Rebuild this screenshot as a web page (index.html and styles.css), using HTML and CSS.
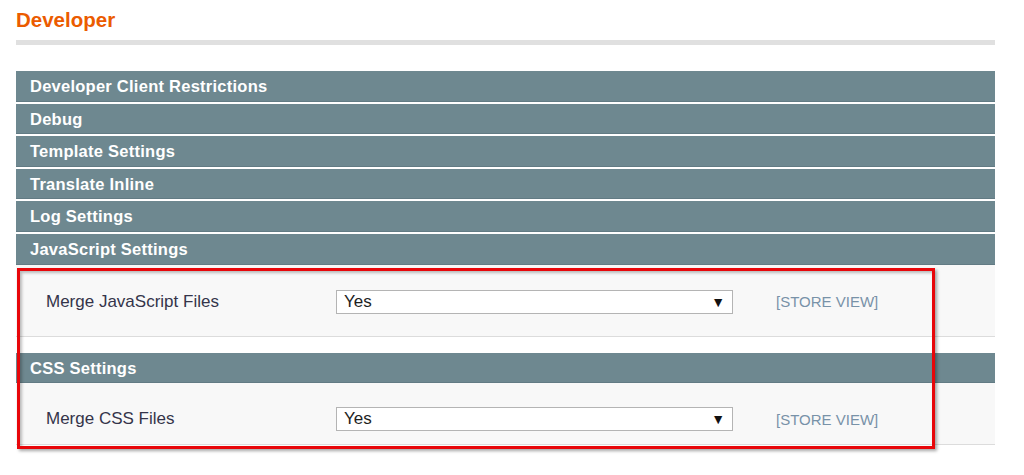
FILE: index.html
```html
<!DOCTYPE html>
<html>
<head>
<meta charset="utf-8">
<link rel="stylesheet" href="styles.css">
</head>
<body>
<div class="page">
  <h1 class="title">Developer</h1>
  <div class="rule"></div>
  <div class="sections">
    <div class="sec-head">Developer Client Restrictions</div>
    <div class="sec-head">Debug</div>
    <div class="sec-head">Template Settings</div>
    <div class="sec-head">Translate Inline</div>
    <div class="sec-head">Log Settings</div>
    <div class="sec-head">JavaScript Settings</div>
    <div class="annotated">
      <div class="sec-body sec-body-js">
        <div class="row">
          <div class="label">Merge JavaScript Files</div>
          <div class="select"><span>Yes</span><span class="arrow">▼</span></div>
          <div class="scope">[STORE VIEW]</div>
        </div>
      </div>
      <div class="spacer"></div>
      <div class="sec-head sec-head-css">CSS Settings</div>
      <div class="sec-body sec-body-css">
        <div class="row">
          <div class="label">Merge CSS Files</div>
          <div class="select"><span>Yes</span><span class="arrow">▼</span></div>
          <div class="scope">[STORE VIEW]</div>
        </div>
      </div>
      <div class="highlight"></div>
    </div>
  </div>
</div>
</body>
</html>
```

FILE: styles.css
```css
html, body {
  margin: 0;
  padding: 0;
  background: #ffffff;
}

.page {
  width: 979px;
  padding: 8px 0 28px 16px;
  font-family: "Liberation Sans", Arial, sans-serif;
}

.title {
  margin: 0;
  font-size: 20.5px;
  line-height: 24px;
  font-weight: bold;
  color: #eb5b00;
}

.rule {
  margin-top: 8px;
  height: 5px;
  background: #e0e0e0;
}

.sections {
  margin-top: 26px;
  display: flex;
  flex-direction: column;
}

.sec-head {
  height: 30.6px;
  line-height: 30px;
  margin-bottom: 2px;
  padding-left: 14px;
  background: #6e8890;
  color: #ffffff;
  font-size: 16.5px;
  letter-spacing: 0.25px;
  font-weight: bold;
  border-bottom: 1px solid #627b84;
  box-sizing: border-box;
}

.sections > .sec-head:nth-child(6) {
  margin-bottom: 0;
}

.annotated {
  position: relative;
  display: flex;
  flex-direction: column;
}

.sec-body {
  background: #f8f8f8;
  border-bottom: 1px solid #dcdcdc;
  padding-left: 30px;
  box-sizing: border-box;
}

.sec-body-js {
  height: 72px;
  padding-top: 25px;
}

.spacer {
  height: 16px;
}

.sec-head-css {
  margin-bottom: 0;
}

.sec-body-css {
  height: 62px;
  padding-top: 24px;
}

.row {
  display: flex;
  align-items: center;
  height: 24px;
}

.label {
  width: 290px;
  font-size: 17px;
  color: #34344a;
}

.select {
  width: 397px;
  height: 24px;
  box-sizing: border-box;
  border: 1px solid #b4b4b4;
  background: #ffffff;
  display: flex;
  align-items: center;
  justify-content: space-between;
  padding: 0 7px 0 7px;
  font-size: 17px;
  color: #1e1e1e;
}

.arrow {
  font-size: 14px;
  color: #111;
}

.scope {
  margin-left: 43px;
  font-size: 15px;
  color: #7892a8;
}

.highlight {
  position: absolute;
  left: 1px;
  top: 3px;
  width: 918px;
  height: 181px;
  box-sizing: border-box;
  border: 3px solid #e8060a;
  box-shadow: 2px 2px 3px rgba(0, 0, 0, 0.35), inset 2px 2px 3px rgba(0, 0, 0, 0.25);
  pointer-events: none;
}
```
